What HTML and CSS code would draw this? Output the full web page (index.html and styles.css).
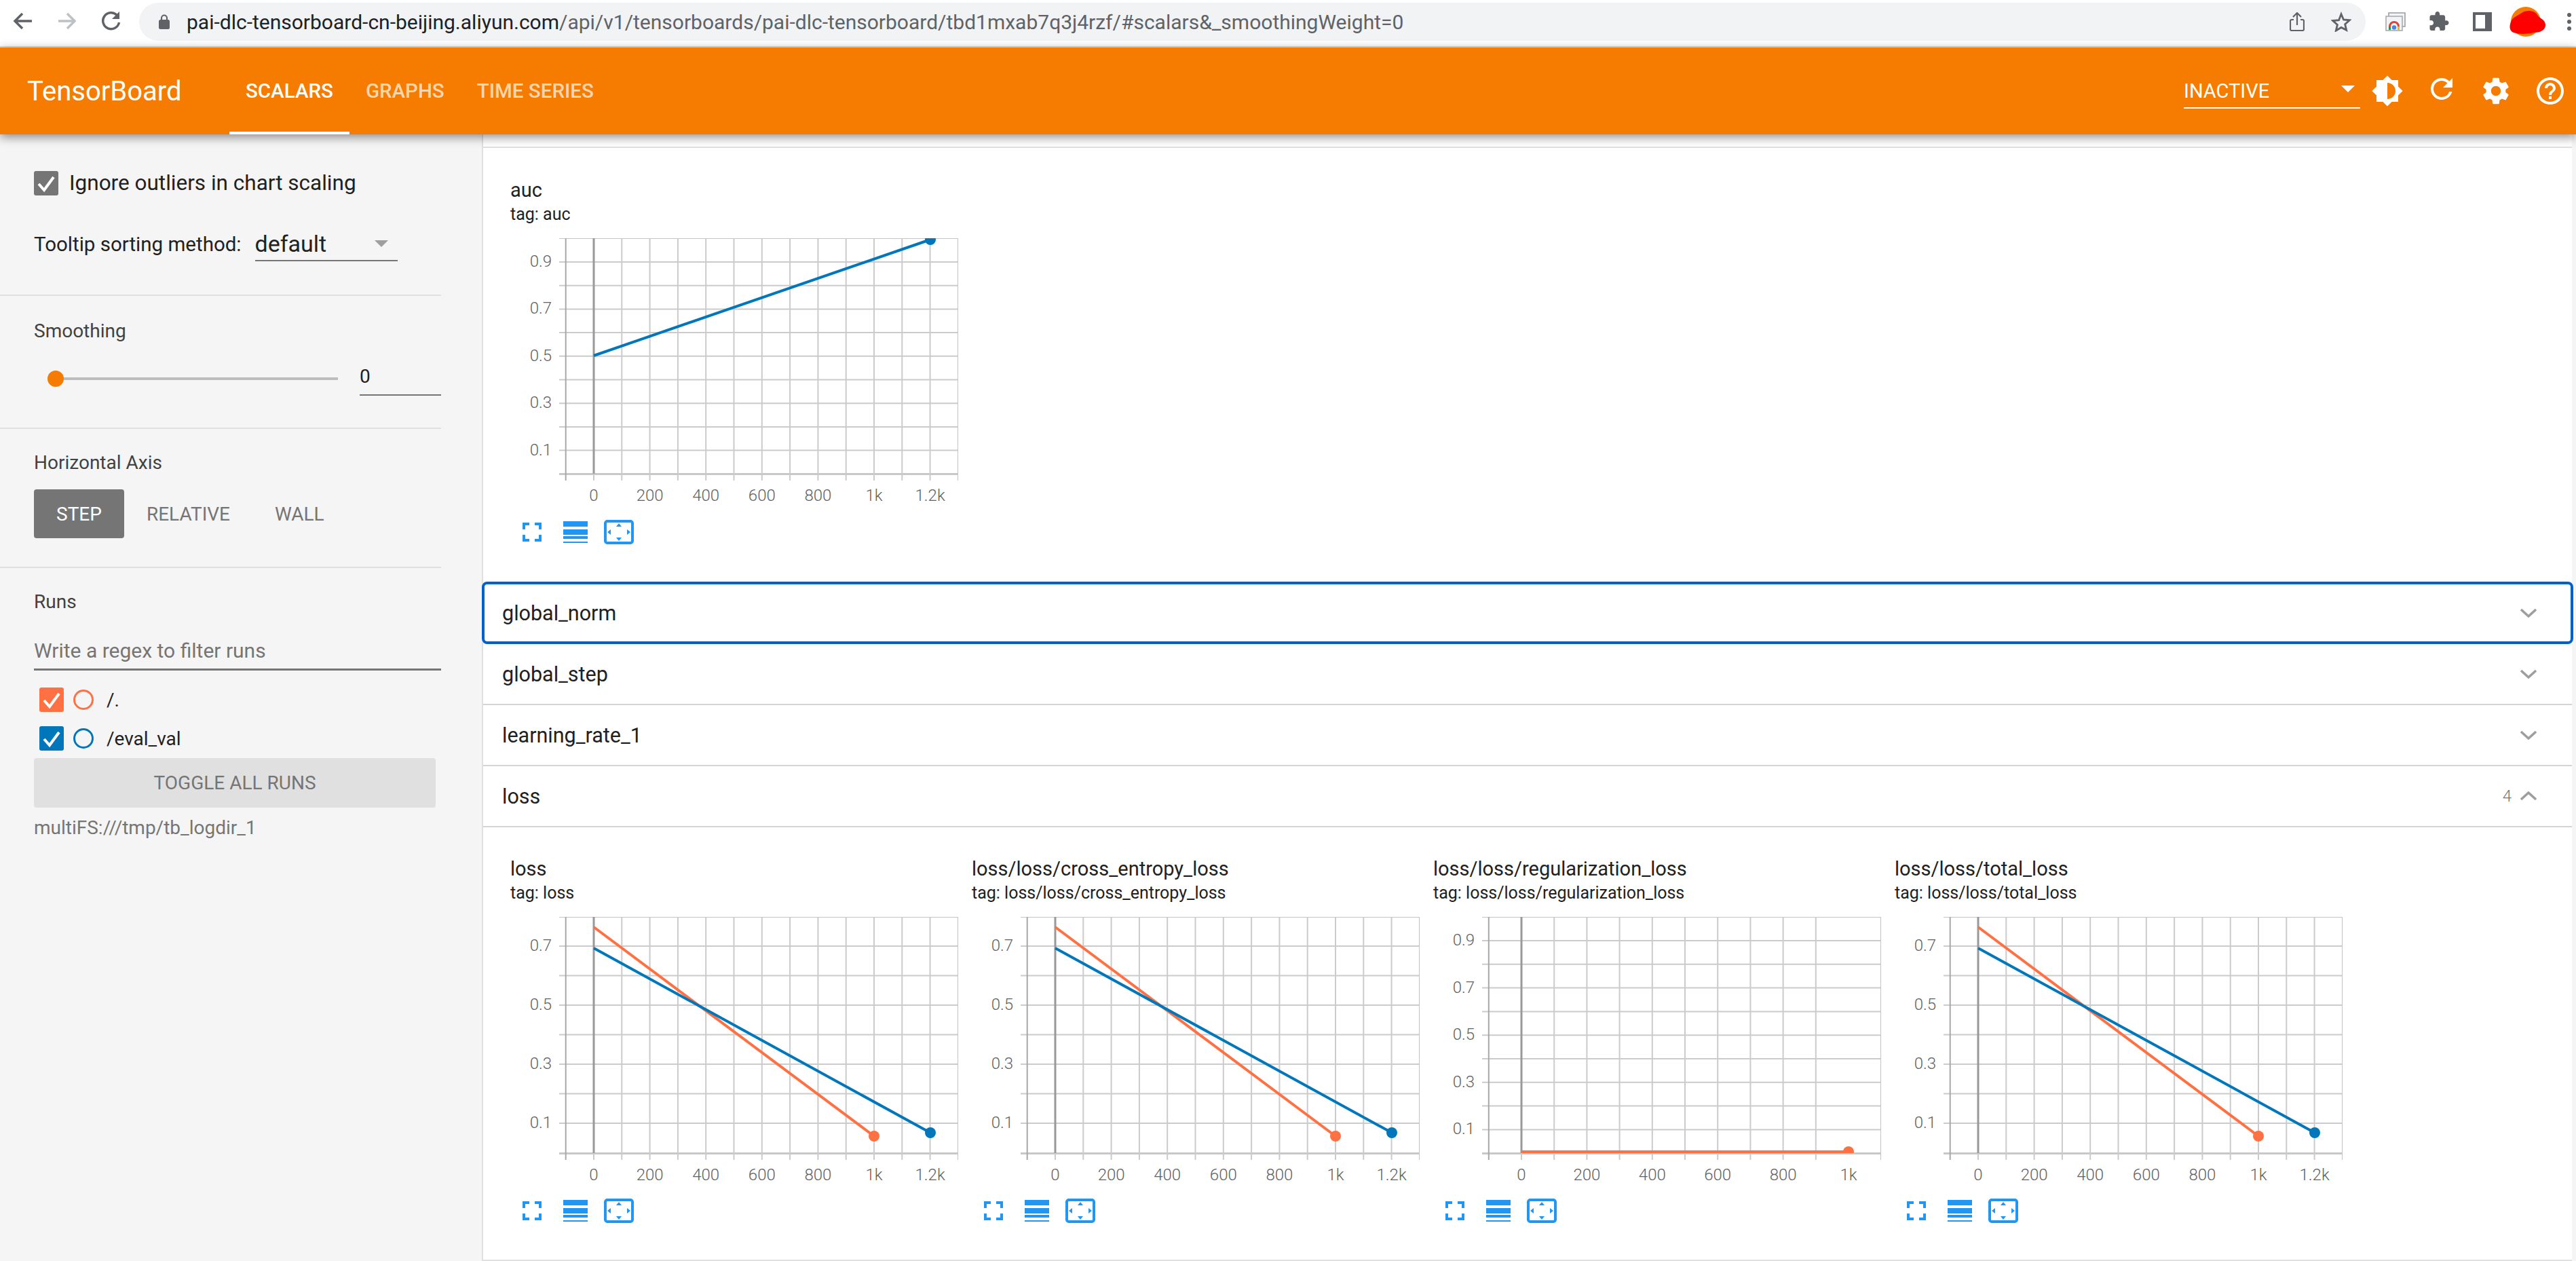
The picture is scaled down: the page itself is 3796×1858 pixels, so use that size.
FILE: index.html
```html
<!DOCTYPE html>
<html lang="en">
<head>
    <meta charset="UTF-8">
    <title>TensorBoard</title>
    <link rel="stylesheet" href="styles.css">
</head>
<body>
    <div class="browser-bar">
        <svg class="nav-icon" viewBox="0 0 40 40"><path d="M34 20H10M20 9L9 20l11 11" fill="none" stroke="#5f6368" stroke-width="3.5"/></svg>
        <svg class="nav-icon" viewBox="0 0 40 40"><path d="M8 20h24M21 9l11 11-11 11" fill="none" stroke="#bdc1c6" stroke-width="3.5"/></svg>
        <svg class="nav-icon" viewBox="0 0 40 40"><path d="M29 11a12 12 0 1 0 3.5 11" fill="none" stroke="#5f6368" stroke-width="3.5"/><path d="M33 6v11H22z" fill="#5f6368"/></svg>
        <div class="url-box">
            <svg class="lock" viewBox="0 0 16 22"><path d="M4 9V5.5a4 4 0 0 1 8 0V9" fill="none" stroke="#5f6368" stroke-width="2.2"/><rect y="8" width="16" height="14" rx="2.5" fill="#5f6368"/></svg>
            <span class="url-host">pai-dlc-tensorboard-cn-beijing.aliyun.com</span><span class="url-path">/api/v1/tensorboards/pai-dlc-tensorboard/tbd1mxab7q3j4rzf/#scalars&amp;_smoothingWeight=0</span>
            <svg class="share" viewBox="0 0 22 28"><path d="M6 11H3a2 2 0 0 0-2 2v12a2 2 0 0 0 2 2h16a2 2 0 0 0 2-2V13a2 2 0 0 0-2-2h-3M11 19V2M5 7l6-6 6 6" fill="none" stroke="#5f6368" stroke-width="2.2"/></svg>
            <svg class="star" viewBox="0 0 32 32"><path d="M16 4l3.7 8.8 9.5.8-7.2 6.3 2.2 9.3L16 25l-8.2 5 2.2-9.3-7.200-6.300 9.500-.8z" fill="none" stroke="#5f6368" stroke-width="3"/></svg>
        </div>
        <svg class="ext-tabs" viewBox="0 0 30 28"><rect x="5" y="1" width="24" height="20" fill="#f1f3f4" stroke="#9aa0a6" stroke-width="1.6"/><rect x="1" y="6" width="24" height="21" fill="#f1f3f4" stroke="#a8acb0" stroke-width="1.6"/><path d="M5 26v-5a8 8 0 0 1 16 0v5h-3v-5a5 5 0 0 0-10 0v5z" fill="#db4437"/><path d="M5 21h3v5H5z" fill="#0f9d58"/><path d="M18 21h3v5h-3z" fill="#f4b400"/><circle cx="13" cy="22.5" r="3.2" fill="#4285f4"/></svg>
        <svg class="ext-puzzle" viewBox="2 1 21 21"><path d="M20.5 11H19V7c0-1.1-.9-2-2-2h-4V3.5C13 2.12 11.88 1 10.5 1S8 2.12 8 3.5V5H4c-1.1 0-1.99.9-1.99 2v3.8H3.5c1.49 0 2.7 1.21 2.7 2.7s-1.21 2.7-2.7 2.7H2V20c0 1.1.9 2 2 2h3.8v-1.5c0-1.49 1.21-2.7 2.7-2.7 1.49 0 2.7 1.21 2.7 2.7V22H17c1.1 0 2-.9 2-2v-4h1.5c1.38 0 2.5-1.12 2.5-2.5S21.88 11 20.5 11z" fill="#5f6368"/></svg>
        <div class="side-toggle"></div>
        <svg class="avatar" viewBox="0 0 54 44"><ellipse cx="24" cy="22" rx="22" ry="22" fill="#f57c00"/><path d="M18 9C24 4 38 5 41 12C43 17 53 18 53 27C53 35 44 38 36 38C28 40 14 41 6 38C-1 35 0 28 2 22C4 16 12 13 18 9z" fill="#ff0000"/></svg>
        <div class="menu-dots"><i></i><i></i><i></i></div>
    </div>

    <header class="toolbar">
        <div class="logo">TensorBoard</div>
        <nav class="tabs">
            <a class="tab active">Scalars</a>
            <a class="tab">Graphs</a>
            <a class="tab">Time Series</a>
        </nav>
        <div class="toolbar-right">
            <div class="plugin-select">Inactive<span class="caret white"></span></div>
            <svg class="tool-icon" viewBox="0 0 24 24"><path d="M20 15.31L23.31 12 20 8.69V4h-4.69L12 .69 8.69 4H4v4.69L.69 12 4 15.31V20h4.69L12 23.31 15.31 20H20v-4.69zM12 18V6c3.31 0 6 2.69 6 6s-2.69 6-6 6z"/></svg>
            <svg class="tool-icon refresh" viewBox="0 0 24 24"><path d="M17.65 6.35A7.958 7.958 0 0 0 12 4c-4.42 0-7.99 3.58-7.99 8s3.57 8 7.99 8c3.73 0 6.84-2.55 7.73-6h-2.08A5.99 5.99 0 0 1 12 18c-3.31 0-6-2.69-6-6s2.69-6 6-6c1.66 0 3.14.69 4.22 1.78L13 11h7V4l-2.35 2.35z"/></svg>
            <svg class="tool-icon" viewBox="0 0 24 24"><path d="M19.14 12.94c.04-.3.06-.61.06-.94 0-.32-.02-.64-.07-.94l2.03-1.58a.49.49 0 0 0 .12-.61l-1.92-3.32a.488.488 0 0 0-.59-.22l-2.39.96c-.5-.38-1.03-.7-1.62-.94l-.36-2.54a.484.484 0 0 0-.48-.41h-3.84c-.24 0-.43.17-.47.41l-.36 2.54c-.59.24-1.13.57-1.62.94l-2.39-.96c-.22-.08-.47 0-.59.22L2.74 8.87c-.12.21-.08.47.12.61l2.03 1.58c-.05.3-.09.63-.09.94s.02.64.07.94l-2.03 1.58a.49.49 0 0 0-.12.61l1.92 3.32c.12.22.37.29.59.22l2.39-.96c.5.38 1.03.7 1.62.94l.36 2.54c.05.24.24.41.48.41h3.84c.24 0 .44-.17.47-.41l.36-2.54c.59-.24 1.13-.56 1.62-.94l2.39.96c.22.08.47 0 .59-.22l1.92-3.32c.12-.22.07-.47-.12-.61l-2.01-1.58zM12 15.6c-1.98 0-3.6-1.62-3.6-3.6s1.62-3.6 3.6-3.6 3.6 1.62 3.6 3.6-1.62 3.6-3.6 3.6z"/></svg>
            <svg class="tool-icon" viewBox="0 0 24 24"><path d="M11 18h2v-2h-2v2zm1-16C6.48 2 2 6.48 2 12s4.48 10 10 10 10-4.48 10-10S17.52 2 12 2zm0 18c-4.41 0-8-3.59-8-8s3.59-8 8-8 8 3.59 8 8-3.59 8-8 8zm0-14c-2.21 0-4 1.79-4 4h2c0-1.1.9-2 2-2s2 .9 2 2c0 2-3 1.75-3 5h2c0-2.25 3-2.5 3-5 0-2.21-1.79-4-4-4z"/></svg>
        </div>
    </header>

    <div class="page">
        <aside class="sidebar">
            <section class="side-section options">
                <label class="check-row">
                    <span class="check gray"><svg viewBox="0 0 36 36"><path d="M7 19l8 9 14-19" fill="none" stroke="#fff" stroke-width="4"/></svg></span>
                    Ignore outliers in chart scaling
                </label>
                <div class="sort-row">
                    <span>Tooltip sorting method:</span>
                    <div class="sort-select">default<span class="caret"></span></div>
                </div>
            </section>
            <section class="side-section smoothing">
                <h3 class="side-title">Smoothing</h3>
                <div class="slider-row">
                    <div class="slider"><span class="thumb"></span></div>
                    <div class="slider-value">0</div>
                </div>
            </section>
            <section class="side-section axis">
                <h3 class="side-title">Horizontal Axis</h3>
                <div class="axis-buttons">
                    <button class="axis-btn selected">STEP</button>
                    <button class="axis-btn">RELATIVE</button>
                    <button class="axis-btn">WALL</button>
                </div>
            </section>
            <section class="side-section runs">
                <h3 class="side-title">Runs</h3>
                <div class="run-filter">Write a regex to filter runs</div>
                <div class="run-row">
                    <span class="check orange"><svg viewBox="0 0 36 36"><path d="M7 19l8 9 14-19" fill="none" stroke="#fff" stroke-width="4"/></svg></span>
                    <span class="run-dot orange-ring"></span>
                    <span>/.</span>
                </div>
                <div class="run-row">
                    <span class="check blue"><svg viewBox="0 0 36 36"><path d="M7 19l8 9 14-19" fill="none" stroke="#fff" stroke-width="4"/></svg></span>
                    <span class="run-dot blue-ring"></span>
                    <span>/eval_val</span>
                </div>
                <button class="toggle-btn">TOGGLE ALL RUNS</button>
                <div class="logdir">multiFS:///tmp/tb_logdir_1</div>
            </section>
        </aside>

        <main class="main">
            <div class="top-strip"></div>
            <section class="group auc-group">
                <div class="chart-card" data-chart="auc">
                    <div class="chart-title">auc</div>
                    <div class="chart-tag">tag: auc</div>
                </div>
            </section>

            <div class="group-row focused"><span>global_norm</span><svg class="chevron" viewBox="0 0 24 14"><path d="M1 2l11 10L23 2" fill="none" stroke="#9e9e9e" stroke-width="3.5"/></svg></div>
            <div class="group-row"><span>global_step</span><svg class="chevron" viewBox="0 0 24 14"><path d="M1 2l11 10L23 2" fill="none" stroke="#9e9e9e" stroke-width="3.5"/></svg></div>
            <div class="group-row"><span>learning_rate_1</span><svg class="chevron" viewBox="0 0 24 14"><path d="M1 2l11 10L23 2" fill="none" stroke="#9e9e9e" stroke-width="3.5"/></svg></div>
            <div class="group-row"><span>loss</span><span class="count">4</span><svg class="chevron" viewBox="0 0 24 14"><path d="M1 12L12 2l11 10" fill="none" stroke="#9e9e9e" stroke-width="3.5"/></svg></div>

            <section class="group loss-group">
                <div class="chart-card" data-chart="loss">
                    <div class="chart-title">loss</div>
                    <div class="chart-tag">tag: loss</div>
                </div>
                <div class="chart-card" data-chart="loss">
                    <div class="chart-title">loss/loss/cross_entropy_loss</div>
                    <div class="chart-tag">tag: loss/loss/cross_entropy_loss</div>
                </div>
                <div class="chart-card" data-chart="reg">
                    <div class="chart-title">loss/loss/regularization_loss</div>
                    <div class="chart-tag">tag: loss/loss/regularization_loss</div>
                </div>
                <div class="chart-card" data-chart="loss">
                    <div class="chart-title">loss/loss/total_loss</div>
                    <div class="chart-tag">tag: loss/loss/total_loss</div>
                </div>
            </section>
        </main>
    </div>

    <script src="charts.js"></script>
</body>
</html>
```

FILE: styles.css
```css
* {
    margin: 0;
    padding: 0;
    box-sizing: border-box;
}

html, body {
    height: 100%;
    overflow: hidden;
}

body {
    display: flex;
    flex-direction: column;
    font-family: Roboto, "Liberation Sans", sans-serif;
    font-size: 28px;
    color: #212121;
    background: #fff;
}

/* browser chrome */
.browser-bar {
    height: 70px;
    flex: none;
    display: flex;
    align-items: flex-start;
    padding: 4px 0 0 13px;
    border-bottom: 2px solid #dedede;
    overflow: hidden;
}

.nav-icon {
    width: 40px;
    height: 40px;
    margin: 7px 25px 0 0;
}

.url-box {
    width: 3281px;
    height: 56px;
    margin-left: -3px;
    display: flex;
    align-items: center;
    padding-left: 29px;
    background: #f1f3f4;
    border-radius: 28px;
    font-size: 30px;
    white-space: nowrap;
}

.lock {
    width: 16px;
    height: 22px;
    margin-right: 25px;
}

.url-host {
    color: #202124;
}

.url-path {
    color: #5f6368;
}

.share {
    width: 22px;
    height: 28px;
    margin-left: auto;
}

.star {
    width: 30px;
    height: 30px;
    margin: 0 21px 0 39px;
}

.ext-tabs {
    width: 30px;
    height: 28px;
    margin: 14px 0 0 29px;
}

.ext-puzzle {
    width: 29px;
    height: 28px;
    margin: 13px 0 0 35px;
}

.side-toggle {
    width: 28px;
    height: 28px;
    margin: 14px 0 0 35px;
    border: solid #5f6368;
    border-width: 4px 10px 4px 4px;
}

.avatar {
    width: 54px;
    height: 44px;
    margin: 6px 0 0 26px;
}

.menu-dots {
    display: flex;
    flex-direction: column;
    gap: 4px;
    margin: 15px 0 0 31px;
}

.menu-dots i {
    width: 6px;
    height: 6px;
    border-radius: 50%;
    background: #5f6368;
}

/* tensorboard toolbar */
.toolbar {
    height: 128px;
    flex: none;
    display: flex;
    align-items: center;
    padding: 0 14px 0 40px;
    background: #f57c00;
    color: #fff;
    box-shadow: 0 4px 14px rgba(0, 0, 0, 0.45);
    position: relative;
    z-index: 2;
}

.logo {
    font-size: 40px;
    width: 298px;
}

.tabs {
    display: flex;
    align-self: stretch;
    font-size: 29.5px;
}

.tab {
    display: flex;
    align-items: center;
    padding: 4px 24px 0;
    font-weight: 500;
    text-transform: uppercase;
    color: rgba(255, 255, 255, 0.7);
    border-bottom: 4px solid transparent;
}

.tab.active {
    color: #fff;
    border-bottom-color: #fff;
}

.toolbar-right {
    margin-left: auto;
    display: flex;
    align-items: center;
    gap: 32px;
}

.plugin-select {
    width: 260px;
    height: 52px;
    margin: 0 -16px 0 0;
    display: flex;
    align-items: center;
    justify-content: space-between;
    padding: 2px 8px 0 0;
    font-size: 29px;
    text-transform: uppercase;
    border-bottom: 2px solid #fff;
}

.caret {
    width: 0;
    height: 0;
    border-left: 10px solid transparent;
    border-right: 10px solid transparent;
    border-top: 10px solid #9e9e9e;
}

.caret.white {
    border-top-color: #fff;
    margin-top: -6px;
}

.tool-icon {
    width: 48px;
    height: 48px;
    fill: #fff;
}

.tool-icon.refresh {
    margin-top: -6px;
}

/* layout under the toolbar */
.page {
    flex: 1;
    min-height: 0;
    display: flex;
}

.sidebar {
    width: 710px;
    flex: none;
    background: #f5f5f5;
}

.side-section {
    width: 650px;
    padding-left: 50px;
    border-bottom: 2px solid #e0e0e0;
}

.options {
    height: 238px;
    padding-top: 53px;
}

.check-row {
    display: flex;
    align-items: center;
    gap: 16px;
    font-size: 31.5px;
}

.check {
    width: 36px;
    height: 36px;
    flex: none;
    display: block;
    border-radius: 3px;
}

.check svg {
    display: block;
}

.check.gray {
    background: #757575;
}

.check.orange {
    background: #ff7043;
}

.check.blue {
    background: #0077bb;
}

.sort-row {
    display: flex;
    align-items: center;
    gap: 20px;
    margin-top: 47px;
    font-size: 29.5px;
}

.sort-select {
    width: 210px;
    height: 50px;
    display: flex;
    align-items: center;
    justify-content: space-between;
    padding-right: 14px;
    font-size: 34px;
    border-bottom: 2px solid #757575;
}

.side-title {
    font-size: 28px;
    font-weight: 400;
    color: #424242;
}

.smoothing {
    height: 196px;
    padding-top: 35px;
}

.slider-row {
    display: flex;
    align-items: center;
    margin-top: 29px;
}

.slider {
    width: 416px;
    height: 4px;
    margin: 0 32px;
    background: #bdbdbd;
    position: relative;
}

.thumb {
    position: absolute;
    left: -12px;
    top: -10px;
    width: 24px;
    height: 24px;
    border-radius: 50%;
    background: #f57c00;
}

.slider-value {
    width: 120px;
    height: 50px;
    line-height: 44px;
    border-bottom: 2px solid #757575;
    font-size: 28px;
}

.axis {
    height: 205px;
    padding-top: 33px;
}

.axis-buttons {
    display: flex;
    margin-top: 23px;
}

.axis-btn {
    height: 72px;
    padding: 0 33px;
    background: none;
    border: none;
    border-radius: 4px;
    font: 400 28px Roboto, sans-serif;
    color: #757575;
}

.axis-btn.selected {
    background: #757575;
    color: #fff;
}

.runs {
    border-bottom: none;
    padding-top: 33px;
}

.run-filter {
    height: 50px;
    margin-top: 35px;
    font-size: 30px;
    color: #757575;
    line-height: 42px;
    border-bottom: 3px solid #757575;
}

.run-row {
    display: flex;
    align-items: center;
    height: 36px;
    margin: 25px 0 0 8px;
    gap: 14px;
    font-size: 28px;
}

.run-row + .run-row {
    margin-top: 21px;
}

.run-dot {
    width: 30px;
    height: 30px;
    margin-right: 5px;
    border-radius: 50%;
    border: 3px solid;
}

.orange-ring {
    color: #ff7043;
}

.blue-ring {
    color: #0077bb;
}

.toggle-btn {
    display: block;
    width: 592px;
    height: 73px;
    margin-top: 11px;
    background: #e0e0e0;
    border: none;
    border-radius: 4px;
    font: 400 28px Roboto, sans-serif;
    color: #757575;
}

.logdir {
    margin-top: 13px;
    font-size: 28px;
    color: #757575;
}

.main {
    flex: 1;
    min-width: 0;
    display: flex;
    flex-direction: column;
    padding-right: 6px;
    background: #f5f5f5;
    border-left: 2px solid #e0e0e0;
}

.top-strip {
    height: 20px;
    flex: none;
    background: #fff;
    border-bottom: 2px solid #e0e0e0;
}

.group {
    background: #fff;
    display: flex;
    padding-left: 40px;
}

.auc-group {
    height: 639px;
    flex: none;
    padding-top: 44px;
}

.loss-group {
    flex: 1;
    padding-top: 43px;
    border-bottom: 2px solid #e0e0e0;
}

.chart-card {
    width: 680px;
    flex: none;
}

.chart-title {
    line-height: 36px;
    font-size: 29px;
}

.chart-tag {
    line-height: 36px;
    font-size: 25px;
}

.chart-svg {
    display: block;
    margin-top: 17px;
}

.chart-svg text {
    font-size: 24px;
    font-weight: 300;
    fill: #616161;
}

.chart-actions {
    display: flex;
    align-items: center;
    height: 36px;
    margin-top: 15px;
    padding-left: 18px;
}

.act-full {
    width: 28px;
    height: 28px;
    margin-right: 32px;
}

.act-lines {
    width: 36px;
    height: 32px;
    margin-right: 24px;
}

.act-fit {
    width: 44px;
    height: 36px;
}

.group-row {
    height: 90px;
    flex: none;
    display: flex;
    align-items: center;
    padding: 0 52px 0 28px;
    font-size: 30.5px;
    background: #fff;
    border-bottom: 2px solid #d4d4d4;
}

.group-row .count {
    margin-left: auto;
    font-size: 24px;
    font-weight: 300;
    color: #757575;
}

.chevron {
    width: 24px;
    height: 14px;
    margin-left: auto;
}

.count + .chevron {
    margin-left: 13px;
}

.group-row.focused {
    height: 92px;
    margin: 0 -2px;
    padding: 0 50px 0 26px;
    border: 4px solid #0060d0;
    border-radius: 8px;
    position: relative;
    z-index: 1;
}
```

FILE: charts.js
```js
// tick layout of the three kinds of scalar chart, all in px from the plot's top left corner
var BLUE = "#0077bb";
var ORANGE = "#ff7043";
var GRID = "#cbcbcb";
var PLOT_LEFT = 72;
var PLOT_RIGHT = 660;

var charts = {
    auc: {
        zero: 123, step: 41.3, ticks: 14, labels: ["0", "200", "400", "600", "800", "1k", "1.2k"],
        first: 35, gap: 34.7, rows: 9, height: 347, yLabels: ["0.9", "0.7", "0.5", "0.3", "0.1"],
        series: [{ color: BLUE, from: [123, 173], to: [619, 2] }]
    },
    loss: {
        zero: 123, step: 41.3, ticks: 14, labels: ["0", "200", "400", "600", "800", "1k", "1.2k"],
        first: 43, gap: 43.5, rows: 7, height: 348, yLabels: ["0.7", "0.5", "0.3", "0.1"],
        series: [
            { color: ORANGE, from: [123, 15], to: [536, 323] },
            { color: BLUE, from: [123, 46], to: [619, 318] }
        ]
    },
    reg: {
        zero: 130, step: 48.2, ticks: 11, labels: ["0", "200", "400", "600", "800", "1k"],
        first: 35, gap: 34.8, rows: 9, height: 348, yLabels: ["0.9", "0.7", "0.5", "0.3", "0.1"],
        series: [{ color: ORANGE, from: [130, 346], to: [612, 346] }]
    }
};

var actions =
    '<div class="chart-actions">' +
    '<svg class="act-full" viewBox="0 0 28 28"><path d="M0 0h10v4H4v6H0zM18 0h10v10h-4V4h-6zM0 18h4v6h6v4H0zM24 18h4v10H18v-4h6z" fill="#2196f3"/></svg>' +
    '<svg class="act-lines" viewBox="0 0 36 32"><path d="M0 0h36v8H0zM0 12h36v8H0zM0 22h36v4H0zM0 30h36v2H0z" fill="#2196f3"/></svg>' +
    '<svg class="act-fit" viewBox="0 0 44 36"><rect x="2" y="2" width="40" height="32" rx="3" fill="none" stroke="#2196f3" stroke-width="4"/><path d="M22 5l4 5h-8zM22 31l-4-5h8zM5 18l5-4v8zM39 18l-5 4v-8z" fill="#2196f3"/></svg>' +
    '</div>';

function drawChart(c, id) {
    var out = '<svg class="chart-svg" width="668" height="400" viewBox="0 0 668 400">';
    var clip = "plot" + id;
    out += '<clipPath id="' + clip + '"><rect x="' + PLOT_LEFT + '" y="0" width="' + (PLOT_RIGHT - PLOT_LEFT) + '" height="' + c.height + '"/></clipPath>';

    // horizontal grid
    out += '<path d="M' + PLOT_LEFT + ' 0.5H' + PLOT_RIGHT + '" stroke="#c4c4c4" stroke-width="1"/>';
    for (var i = 0; i < c.rows; i++) {
        var y = c.first + i * c.gap;
        out += '<path d="M' + PLOT_LEFT + ' ' + y + 'H' + PLOT_RIGHT + '" stroke="' + GRID + '" stroke-width="2"/>';
        if (i % 2 == 0) {
            out += '<text x="61" y="' + (y + 7) + '" text-anchor="end">' + c.yLabels[i / 2] + '</text>';
        }
    }
    out += '<path d="M' + PLOT_LEFT + ' ' + (c.height + 0.5) + 'H' + PLOT_RIGHT + '" stroke="#c8c8c8" stroke-width="3"/>';

    // vertical grid, the first tick sits one step left of zero
    for (var t = 0; t < c.ticks; t++) {
        var x = c.zero + (t - 1) * c.step;
        if (x > PLOT_RIGHT) break;
        var color = t == 0 ? "#a8a8a8" : t == 1 ? "#999" : GRID;
        var end = t == 1 ? c.height : c.height + 10;
        out += '<path d="M' + x + ' 0V' + end + '" stroke="' + color + '" stroke-width="' + (t == 1 ? 3 : 2) + '"/>';
        if (t == 1) {
            out += '<path d="M' + x + ' ' + c.height + 'V' + (c.height + 10) + '" stroke="' + GRID + '" stroke-width="2"/>';
        }
    }
    out += '<path d="M' + (PLOT_RIGHT - 0.5) + ' 0V' + (c.height + 10) + '" stroke="#c4c4c4" stroke-width="1"/>';

    c.labels.forEach(function (label, n) {
        out += '<text x="' + (c.zero + n * 2 * c.step) + '" y="' + (c.height + 40) + '" text-anchor="middle">' + label + '</text>';
    });

    // series with a dot on the last point
    out += '<g clip-path="url(#' + clip + ')">';
    c.series.forEach(function (s) {
        out += '<path d="M' + s.from.join(" ") + 'L' + s.to.join(" ") + '" stroke="' + s.color + '" stroke-width="4" fill="none"/>';
        out += '<circle cx="' + s.to[0] + '" cy="' + s.to[1] + '" r="8" fill="' + s.color + '"/>';
    });
    out += '</g></svg>';
    return out;
}

document.querySelectorAll(".chart-card").forEach(function (card, id) {
    card.insertAdjacentHTML("beforeend", drawChart(charts[card.dataset.chart], id) + actions);
});
```
